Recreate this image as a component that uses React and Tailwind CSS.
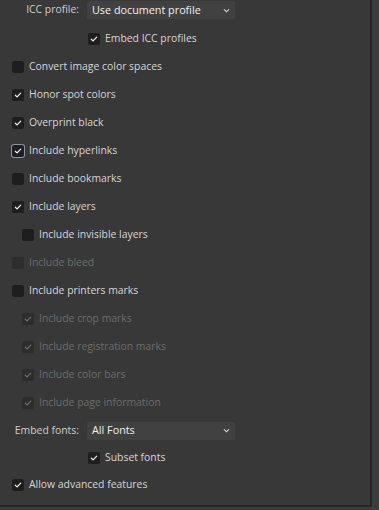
import React from 'react';

const Check = ({ dim }) => (
    <svg viewBox="0 0 12 12" className="h-3 w-3">
        <path
            d="M3.3 6.2 L5.1 7.9 L8.7 4.1"
            fill="none"
            stroke={dim ? '#6f6f6f' : '#f2f2f2'}
            strokeWidth="1.2"
            strokeLinecap="round"
            strokeLinejoin="round"
        />
    </svg>
);

const Box = ({ checked, disabled, focus }) => {
    let cls = 'h-3 w-3 shrink-0 rounded-[2px] flex items-center justify-center ';
    if (disabled) cls += 'bg-[#2d2d2d]';
    else if (focus) cls += 'bg-[#1e1e1e] ring-1 ring-[#8c95a6]';
    else cls += 'bg-[#1e1e1e]';
    return <div className={cls}>{checked && <Check dim={disabled} />}</div>;
};

const Row = ({ label, checked, disabled, focus, indent, h = 'h-[28px]' }) => (
    <div className={`${h} flex items-center gap-[5px] ${indent ? 'pl-[22px]' : 'pl-[12px]'}`}>
        <Box checked={checked} disabled={disabled} focus={focus} />
        <span className={disabled ? 'text-[#6c6c6c]' : 'text-[#d6d6d6]'}>{label}</span>
    </div>
);

const Chevron = () => (
    <svg viewBox="0 0 10 10" className="h-[9px] w-[9px]">
        <path d="M2.5 4 L5 6.3 L7.5 4" fill="none" stroke="#d0d0d0" strokeWidth="1.2" strokeLinecap="round" />
    </svg>
);

const Dropdown = ({ value }) => (
    <div className="w-[148px] h-[18px] bg-[#414141] rounded-[2px] flex items-center justify-between pl-[5px] pr-[4px] text-[#f0f0f0] text-[10.8px]">
        <span>{value}</span>
        <Chevron />
    </div>
);

const SelectRow = ({ label, value, h }) => (
    <div className={`${h} flex items-center`}>
        <span className="w-[79px] text-right text-[#cfcfcf]">{label}</span>
        <div className="ml-[8px]">
            <Dropdown value={value} />
        </div>
    </div>
);

const CenterRow = ({ label, h }) => (
    <div className={`${h} flex items-center gap-[5px] pl-[88px]`}>
        <Box checked />
        <span className="text-[#d6d6d6]">{label}</span>
    </div>
);

export default function App() {
    return (
        <div
            className="w-[379px] h-[510px] bg-[#3c3c3c] flex text-[10.4px] overflow-hidden"
            style={{ fontFamily: '"Open Sans", "Noto Sans", sans-serif' }}
        >
            <div className="w-[372px] h-[507px] bg-[#383838] border-r-2 border-b-2 border-[#262626] flex flex-col">
                <SelectRow label="ICC profile:" value="Use document profile" h="h-[20px]" />
                <div className="h-[5px]" />
                <CenterRow label="Embed ICC profiles" h="h-[28px]" />
                <Row label="Convert image color spaces" />
                <Row label="Honor spot colors" checked />
                <Row label="Overprint black" checked />
                <Row label="Include hyperlinks" checked focus />
                <Row label="Include bookmarks" />
                <Row label="Include layers" checked />
                <Row label="Include invisible layers" indent />
                <Row label="Include bleed" disabled />
                <Row label="Include printers marks" />
                <Row label="Include crop marks" checked disabled indent />
                <Row label="Include registration marks" checked disabled indent />
                <Row label="Include color bars" checked disabled indent />
                <Row label="Include page information" checked disabled indent />
                <SelectRow label="Embed fonts:" value="All Fonts" h="h-[27px]" />
                <CenterRow label="Subset fonts" h="h-[27px]" />
                <Row label="Allow advanced features" checked />
            </div>
        </div>
    );
}
